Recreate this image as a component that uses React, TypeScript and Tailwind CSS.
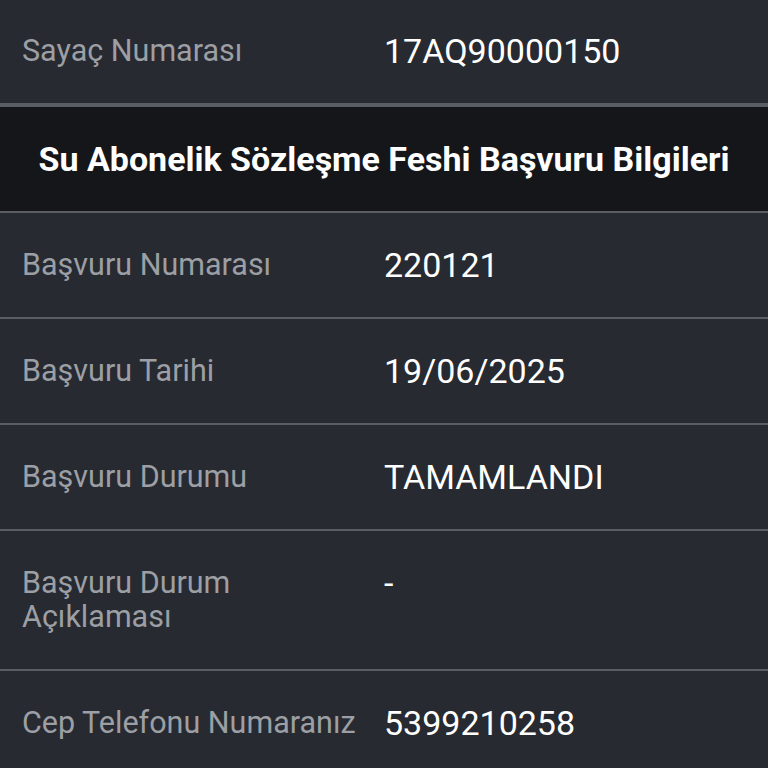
import React from "react";

const Row = ({ label, value }: { label: React.ReactNode; value: string }) => (
  <div className="flex border-t-2 border-[#5a5d63] bg-[#272a31] py-[35px] leading-[34px]">
    <div className="w-[384px] shrink-0 pl-[22px] text-[30.5px] text-[#9c9fa4]">{label}</div>
    <div className="text-[34px] text-white">{value}</div>
  </div>
);

export default function App() {
  return (
    <div className="h-[768px] w-[768px] overflow-hidden bg-[#272a31]" style={{ fontFamily: "Roboto, sans-serif" }}>
      <div className="flex h-[103px] items-center bg-[#272a31] pb-[2px] leading-[34px]">
        <div className="w-[384px] shrink-0 pl-[22px] text-[30.5px] text-[#9c9fa4]">Sayaç Numarası</div>
        <div className="text-[34px] text-white">17AQ90000150</div>
      </div>
      <div className="h-[4px] bg-[#5a5d63]" />
      <div className="flex h-[104px] items-center justify-center bg-[#15161a] text-[34px] font-bold text-white">
        Su Abonelik Sözleşme Feshi Başvuru Bilgileri
      </div>
      <Row label="Başvuru Numarası" value="220121" />
      <Row label="Başvuru Tarihi" value="19/06/2025" />
      <Row label="Başvuru Durumu" value="TAMAMLANDI" />
      <Row label={<>Başvuru Durum<br />Açıklaması</>} value="-" />
      <Row label="Cep Telefonu Numaranız" value="5399210258" />
    </div>
  );
}
